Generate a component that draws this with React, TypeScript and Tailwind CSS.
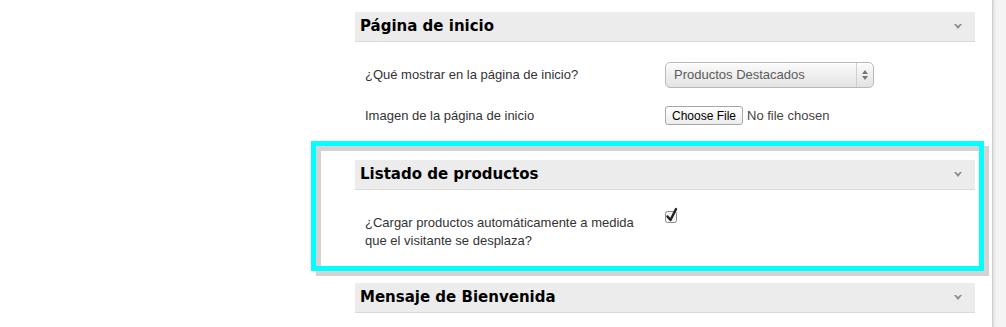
import React from "react";

const labelFont = { fontFamily: '"Liberation Sans", Arial, sans-serif' };
const headFont = { fontFamily: '"DejaVu Sans", "Liberation Sans", sans-serif' };

function Chevron() {
  return (
    <svg width="8" height="7" viewBox="0 0 8 7" className="mr-[13px]">
      <path d="M0 1 L2 1 L4 3 L6 1 L8 1 L4 6 Z" fill="#8a8a8a" />
    </svg>
  );
}

function SectionHeader({ title }: { title: string }) {
  return (
    <div className="flex h-[30px] items-center justify-between border-b border-[#dadada] bg-[#ececec] pl-[5px]">
      <span className="text-[15px] font-bold text-black" style={headFont}>
        {title}
      </span>
      <Chevron />
    </div>
  );
}

function SelectBox() {
  return (
    <div className="flex h-[26px] w-[209px] items-center rounded-[5px] border border-[#b9b9b9] bg-gradient-to-b from-[#fbfbfb] to-[#e3e3e3] shadow-[inset_0_1px_0_#fff]">
      <span className="flex-1 pl-[8px] text-[13px] text-[#5c5c5c]" style={labelFont}>
        Productos Destacados
      </span>
      <div className="flex h-full w-[17px] items-center justify-center border-l border-[#cfcfcf]">
        <svg width="6" height="10" viewBox="0 0 6 10">
          <path d="M3 0 L6 4 L0 4 Z" fill="#777" />
          <path d="M3 10 L6 6 L0 6 Z" fill="#777" />
        </svg>
      </div>
    </div>
  );
}

function FileInput() {
  return (
    <div className="flex items-center">
      <div
        className="flex h-[19px] w-[78px] items-center justify-center rounded-[3px] border border-[#a8a8a8] bg-gradient-to-b from-white to-[#ececec] text-[12px] text-black"
        style={labelFont}
      >
        Choose File
      </div>
      <span className="ml-[4px] text-[13px] text-[#444]" style={labelFont}>
        No file chosen
      </span>
    </div>
  );
}

function Checkbox() {
  return (
    <svg width="14" height="16" viewBox="0 0 14 16">
      <rect x="0.5" y="4.5" width="11" height="11" rx="2" fill="#f3f3f3" stroke="#8c8c8c" />
      <path d="M2.5 9.5 L5.5 13 L11 2" fill="none" stroke="#222" strokeWidth="2.4" strokeLinecap="round" strokeLinejoin="round" />
    </svg>
  );
}

export default function App() {
  return (
    <div className="flex h-[327px] w-full overflow-hidden bg-white">
      <div className="w-[993px] shrink-0 border-r border-[#cfcfcf] bg-white pl-[355px] pt-[12px]">
        <div className="w-[620px]">
          {/* Página de inicio */}
          <SectionHeader title="Página de inicio" />
          <div className="flex flex-col gap-[18px] pb-[34px] pt-[20px]">
            <div className="flex items-center">
              <label className="w-[310px] pl-[10px] text-[13px] text-[#333]" style={labelFont}>
                ¿Qué mostrar en la página de inicio?
              </label>
              <SelectBox />
            </div>
            <div className="flex items-center">
              <label className="w-[310px] pl-[10px] text-[13px] text-[#333]" style={labelFont}>
                Imagen de la página de inicio
              </label>
              <FileInput />
            </div>
          </div>

          {/* Listado de productos, highlighted */}
          <div className="relative">
            <div className="pointer-events-none absolute left-[-39px] top-[-14px] h-[130px] w-[673px] border-[5px] border-[#d3d3d3]" />
            <div className="pointer-events-none absolute left-[-44px] top-[-19px] h-[130px] w-[673px] border-[5px] border-[#00ffff]" />
            <div className="relative">
              <SectionHeader title="Listado de productos" />
              <div className="flex items-start pb-[33px] pt-[17px]">
                <label
                  className="w-[310px] pl-[10px] pt-[7px] text-[13px] leading-[18px] text-[#333]"
                  style={labelFont}
                >
                  ¿Cargar productos automáticamente a medida
                  <br />
                  que el visitante se desplaza?
                </label>
                <Checkbox />
              </div>
            </div>
          </div>

          {/* Mensaje de Bienvenida */}
          <SectionHeader title="Mensaje de Bienvenida" />
        </div>
      </div>
      <div className="flex-1 bg-[#f4f4f4] shadow-[inset_3px_0_3px_-2px_#d8d8d8]" />
    </div>
  );
}
